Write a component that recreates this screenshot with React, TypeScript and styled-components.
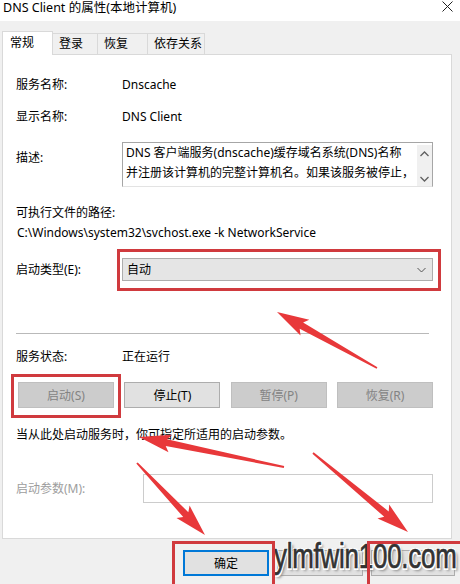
import React from "react";
import styled, { createGlobalStyle } from "styled-components";

const Global = createGlobalStyle`
  html, body { margin: 0; padding: 0; background: #f0f0f0; }
  body {
    font-family: "Noto Sans", "Noto Sans CJK SC", sans-serif;
    font-size: 12px;
    color: #000;
  }
  * { box-sizing: border-box; }
`;

const Window = styled.div`
  position: relative;
  width: 460px;
  height: 584px;
  overflow: hidden;
  background: #f0f0f0;
  display: flex;
  flex-direction: column;
`;

const TitleBar = styled.div`
  height: 21px;
  flex: none;
  background: #fff;
  display: flex;
  align-items: flex-start;
  justify-content: space-between;
  padding: 0 7px 0 3px;
`;

const Title = styled.span`
  font-size: 12.5px;
  line-height: 16px;
  white-space: nowrap;
`;

const CloseIcon = styled.svg`
  margin-top: 1px;
`;

const TabStrip = styled.div`
  margin-top: 10px;
  height: 24px;
  flex: none;
  display: flex;
  align-items: flex-end;
  padding-left: 2px;
  position: relative;
  z-index: 1;
`;

const Tab = styled.div<{ $active?: boolean; $w: number }>`
  width: ${(p) => p.$w}px;
  height: ${(p) => (p.$active ? 24 : 22)}px;
  background: ${(p) => (p.$active ? "#fff" : "#f0f0f0")};
  border: 1px solid #d9d9d9;
  border-bottom: ${(p) => (p.$active ? "none" : "1px solid #d9d9d9")};
  border-left: ${(p) => (p.$active ? "1px solid #d9d9d9" : "none")};
  padding: ${(p) => (p.$active ? "3px 0 0 7px" : "2px 0 0 6px")};
  line-height: 16px;
  white-space: nowrap;
`;

const Panel = styled.div`
  margin: -1px 8px 0 2px;
  height: 485px;
  flex: none;
  background: #fff;
  border: 1px solid #d9d9d9;
  padding: 22px 0 0 13px;
  display: flex;
  flex-direction: column;
`;

const FieldRow = styled.div<{ $mt: number; $col?: number; $top?: boolean }>`
  display: grid;
  grid-template-columns: ${(p) => p.$col ?? 106}px 1fr;
  align-items: ${(p) => (p.$top ? "start" : "center")};
  margin-top: ${(p) => p.$mt}px;
  line-height: 16px;
`;

const Label = styled.span<{ $dim?: boolean; $pt?: number }>`
  color: ${(p) => (p.$dim ? "#9d9d9d" : "#000")};
  padding-top: ${(p) => p.$pt ?? 0}px;
  white-space: nowrap;
`;

const Value = styled.span`
  white-space: nowrap;
`;

const Line = styled.div<{ $mt: number; $pl?: number }>`
  margin-top: ${(p) => p.$mt}px;
  padding-left: ${(p) => p.$pl ?? 0}px;
  line-height: 16px;
  white-space: nowrap;
`;

const TextBox = styled.div`
  width: 311px;
  height: 45px;
  border: 1px solid #a6a6a6;
  border-bottom-color: #e3e3e3;
  display: flex;
`;

const TextContent = styled.div`
  flex: 1;
  padding: 0 0 0 3px;
  line-height: 20px;
  white-space: nowrap;
  overflow: hidden;
`;

const ScrollCol = styled.div`
  width: 15px;
  margin: 2px 0 0 0;
  background: #f0f0f0;
  display: flex;
  flex-direction: column;
  justify-content: space-between;
  align-items: center;
  padding: 6px 0 4px;
`;

const Combo = styled.div`
  width: 311px;
  height: 23px;
  background: #e5e5e5;
  border: 1px solid #adadad;
  display: flex;
  align-items: center;
  justify-content: space-between;
  padding: 0 6px 0 4px;
`;

const Separator = styled.div`
  margin-top: 52px;
  width: 413px;
  height: 1px;
  background: #b9b9b9;
`;

const ButtonRow = styled.div`
  margin-top: 17px;
  margin-left: 2px;
  width: 415px;
  display: flex;
  justify-content: space-between;
`;

const Btn = styled.div<{ $disabled?: boolean; $w?: number; $primary?: boolean }>`
  width: ${(p) => p.$w ?? 96}px;
  height: 26px;
  display: flex;
  align-items: center;
  justify-content: center;
  background: ${(p) => (p.$disabled ? "#cccccc" : "#e1e1e1")};
  border: ${(p) => (p.$primary ? "2px solid #0078d7" : p.$disabled ? "1px solid #bfbfbf" : "1px solid #adadad")};
  color: ${(p) => (p.$disabled ? "#838383" : "#000")};
  white-space: nowrap;
`;

const ParamInput = styled.div`
  width: 290px;
  height: 29px;
  border: 1px solid #cccccc;
  background: #fff;
`;

const Footer = styled.div`
  margin-top: 11px;
  display: flex;
  justify-content: flex-end;
  gap: 8px;
  padding-right: 5px;
`;

const Overlay = styled.svg`
  position: absolute;
  left: 0;
  top: 0;
  pointer-events: none;
`;

const Watermark = styled.div`
  position: absolute;
  left: 274px;
  top: 536px;
  font-family: "Liberation Sans", Arial, sans-serif;
  font-size: 35px;
  line-height: 40px;
  color: #333;
  -webkit-text-stroke: 0.7px #333;
  transform: scaleX(0.74);
  transform-origin: left top;
  letter-spacing: -0.3px;
  white-space: nowrap;
  text-shadow: 1.5px 1.5px 0 #fff, -1.5px -1.5px 0 #fff, 1.5px -1.5px 0 #fff, -1.5px 1.5px 0 #fff,
    3px 3px 3px #8a8a8a;
`;

type Pt = [number, number];

function arrowPoints(t: Pt, h: Pt, headLen = 28, headHalf = 9, neckHalf = 3.5, tailHalf = 0.9): string {
  const dx = h[0] - t[0];
  const dy = h[1] - t[1];
  const L = Math.hypot(dx, dy);
  const ux = dx / L;
  const uy = dy / L;
  const nx = -uy;
  const ny = ux;
  const bx = h[0] - ux * headLen;
  const by = h[1] - uy * headLen;
  const pts: Pt[] = [
    [t[0] + nx * tailHalf, t[1] + ny * tailHalf],
    [bx + nx * neckHalf, by + ny * neckHalf],
    [bx - ux * 4 + nx * headHalf, by - uy * 4 + ny * headHalf],
    [h[0], h[1]],
    [bx - ux * 4 - nx * headHalf, by - uy * 4 - ny * headHalf],
    [bx - nx * neckHalf, by - ny * neckHalf],
    [t[0] - nx * tailHalf, t[1] - ny * tailHalf],
  ];
  return pts.map((p) => `${p[0].toFixed(1)},${p[1].toFixed(1)}`).join(" ");
}

const Chevron = ({ up }: { up?: boolean }) => (
  <svg width="9" height="6" viewBox="0 0 9 6">
    <path d={up ? "M0.5 5 L4.5 1 L8.5 5" : "M0.5 1 L4.5 5 L8.5 1"} fill="none" stroke="#606060" strokeWidth="1.3" />
  </svg>
);

export default function App() {
  const arrows: [Pt, Pt][] = [
    [[377, 368], [277, 312]],
    [[284, 467], [139, 437]],
    [[137, 463], [205, 535]],
    [[313, 453], [408, 532]],
  ];
  return (
    <>
      <Global />
      <Window>
        <TitleBar>
          <Title>DNS Client 的属性(本地计算机)</Title>
          <CloseIcon width="11" height="11" viewBox="0 0 11 11">
            <path d="M0.5 0.5 L10.5 10.5 M10.5 0.5 L0.5 10.5" stroke="#222" strokeWidth="1" />
          </CloseIcon>
        </TitleBar>
        <TabStrip>
          <Tab $active $w={51}>常规</Tab>
          <Tab $w={45}>登录</Tab>
          <Tab $w={50}>恢复</Tab>
          <Tab $w={57}>依存关系</Tab>
        </TabStrip>
        <Panel>
          <FieldRow $mt={0}>
            <Label>服务名称:</Label>
            <Value>Dnscache</Value>
          </FieldRow>
          <FieldRow $mt={16}>
            <Label>显示名称:</Label>
            <Value>DNS Client</Value>
          </FieldRow>
          <FieldRow $mt={17} $top>
            <Label $pt={8}>描述:</Label>
            <TextBox>
              <TextContent>
                DNS 客户端服务(dnscache)缓存域名系统(DNS)名称
                <br />
                并注册该计算机的完整计算机名。如果该服务被停止，
              </TextContent>
              <ScrollCol>
                <Chevron up />
                <Chevron />
              </ScrollCol>
            </TextBox>
          </FieldRow>
          <Line $mt={18}>可执行文件的路径:</Line>
          <Line $mt={4} $pl={1}>C:\Windows\system32\svchost.exe -k NetworkService</Line>
          <FieldRow $mt={17}>
            <Label>启动类型(E):</Label>
            <Combo>
              <span>自动</span>
              <svg width="9" height="6" viewBox="0 0 9 6">
                <path d="M0.5 1 L4.5 5 L8.5 1" fill="none" stroke="#555" strokeWidth="1" />
              </svg>
            </Combo>
          </FieldRow>
          <Separator />
          <FieldRow $mt={15}>
            <Label>服务状态:</Label>
            <Value>正在运行</Value>
          </FieldRow>
          <ButtonRow>
            <Btn $disabled>启动(S)</Btn>
            <Btn>停止(T)</Btn>
            <Btn $disabled>暂停(P)</Btn>
            <Btn $disabled>恢复(R)</Btn>
          </ButtonRow>
          <Line $mt={19}>当从此处启动服务时，你可指定所适用的启动参数。</Line>
          <FieldRow $mt={31} $col={127}>
            <Label $dim>启动参数(M):</Label>
            <ParamInput />
          </FieldRow>
        </Panel>
        <Footer>
          <Btn $primary $w={86}>确定</Btn>
          <Btn $w={86} />
          <Btn $w={84} />
        </Footer>
        <Watermark>ylmfwin100.com</Watermark>
        <Overlay width="460" height="584" viewBox="0 0 460 584">
          <g fill="none" stroke="#d03a3e" strokeWidth="3">
            <rect x="118.5" y="250.5" width="321" height="39" />
            <rect x="12.5" y="375.5" width="107" height="41" />
            <rect x="173.5" y="542.5" width="100" height="45" />
            <rect x="368.5" y="542.5" width="95" height="45" />
          </g>
          <g fill="#e8383a">
            {arrows.map(([t, h], i) => (
              <polygon key={i} points={arrowPoints(t, h)} />
            ))}
          </g>
        </Overlay>
      </Window>
    </>
  );
}
